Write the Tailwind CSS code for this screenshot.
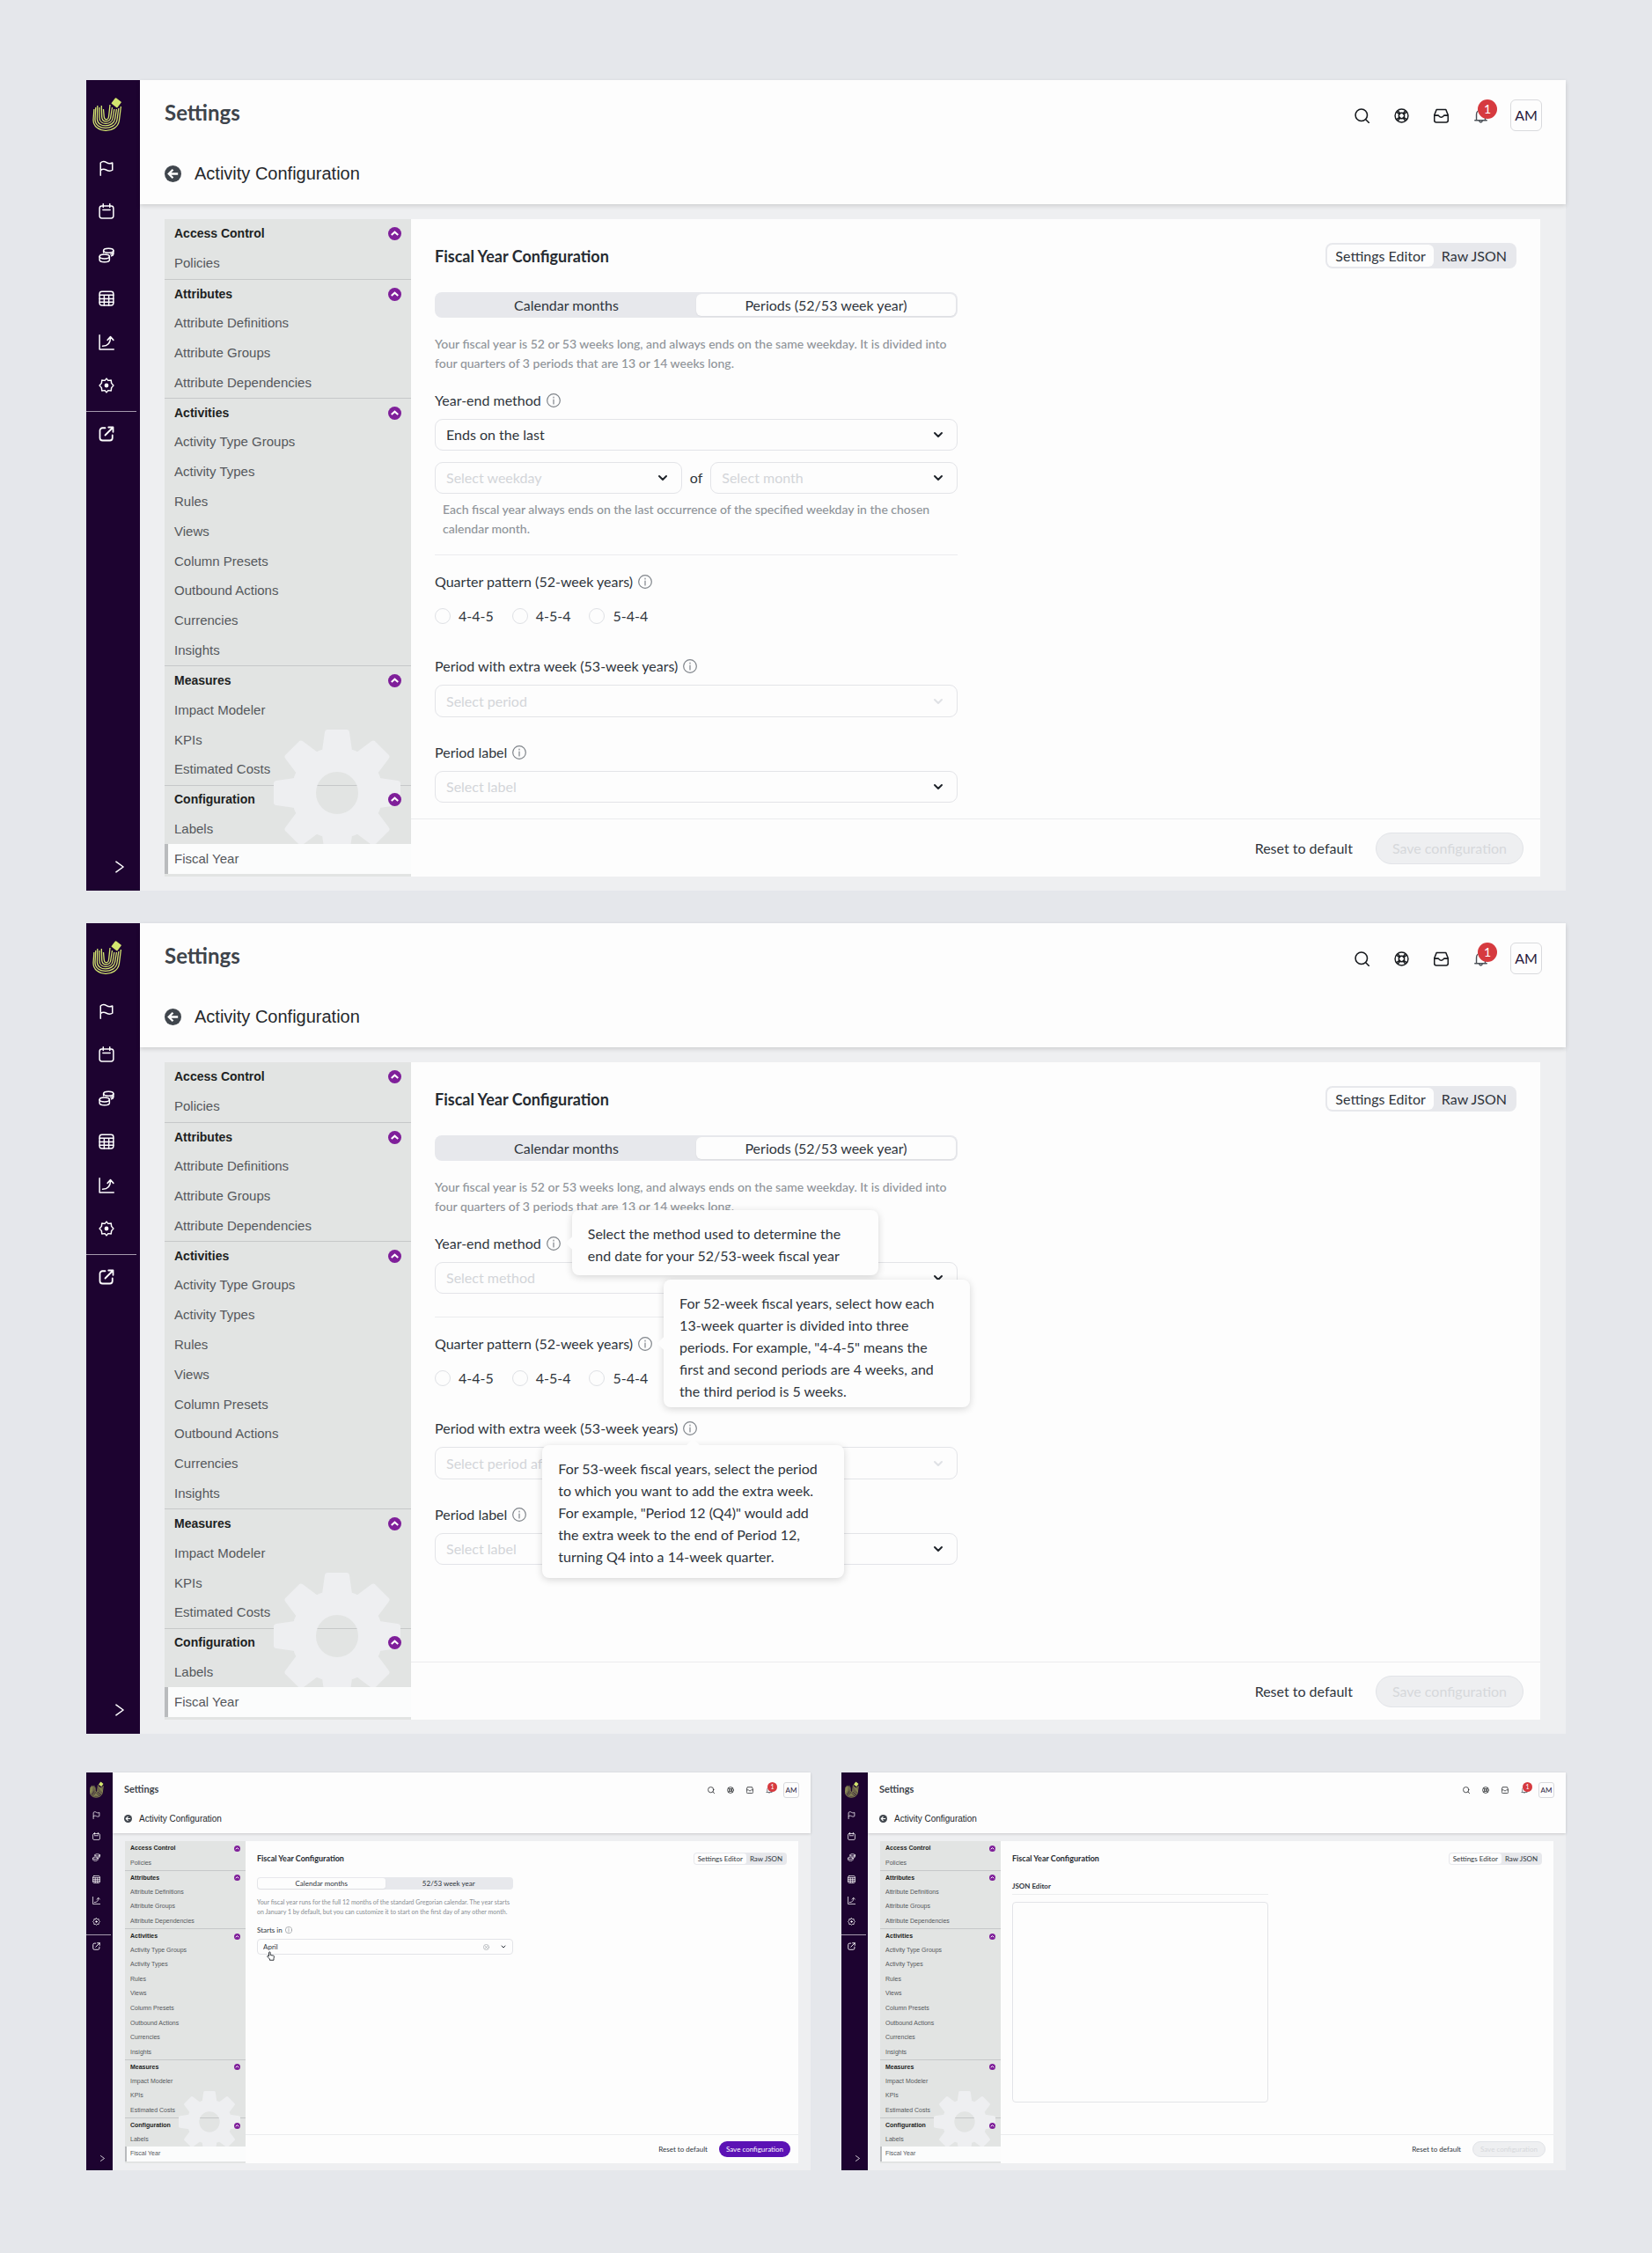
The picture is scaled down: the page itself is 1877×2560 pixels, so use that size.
<!DOCTYPE html>
<html lang="en">
  <head>
    <meta charset="UTF-8" />
    <meta name="viewport" content="width=device-width, initial-scale=1.0" />
    <title>Fiscal Year Configuration</title>
    <script src="https://cdn.jsdelivr.net/npm/@tailwindcss/browser@4"></script>
  </head>

  <body class="bg-[#e5e7eb] font-['Lato','Open_Sans',sans-serif] text-[#2f353c]">
    <main class="flex flex-col px-[98px] pt-[91px] pb-24">
      <div id="periods"></div>
      <div id="tooltips" class="mt-[37px]"></div>
      <div class="mt-11 grid grid-cols-2 gap-[35px]">
        <div id="calendar"></div>
        <div id="json"></div>
      </div>
    </main>

    <script>
      // line icons, all on a 24x24 box
      const icons = {
        flag: '<path d="M3 23V4c3-3 6-2.5 9-.5s6 2 9 .5v11c-3 2-6 1.5-9 0s-6-2-9 .5"/>',
        calendar: '<rect x="1.5" y="4" width="21" height="18.5" rx="3.5"/><path d="M7 1v5M17 1v5M6.5 10h11"/>',
        coins: '<ellipse cx="15" cy="5" rx="7.5" ry="3.2"/><path d="M7.5 5v3M22.5 5v5c0 1.5-1 2.5-3 3M22.5 7.5c0 1.5-2 2.5-4 3"/><ellipse cx="9" cy="14" rx="7.5" ry="3.2"/><path d="M1.5 14v5c0 4.5 15 4.5 15 0v-5"/>',
        table: '<rect x="1.5" y="1.5" width="21" height="21" rx="3.5"/><path d="M1.5 7h21M1.5 12.5h21M1.5 17.5h21M8.5 7v15.5M15.5 7v15.5"/>',
        chart: '<path d="M1.5 1v21.500H23M6 17.5c8 0 12-4 12-13M13.5 8.5 18 3.5l4.5 5"/>',
        cog: '<path d="M12 1.5 14.5 4.5 19 4l.5 4.5 3 3.5-3 3.5L19 20l-4.5-.5-2.5 3-2.5-3L5 20l-.5-4.5-3-3.5 3-3.5L5 4l4.500.5z"/><circle cx="12" cy="12" r="2.2" fill="currentColor"/>',
        external: '<path d="M10 3H6a4 4 0 0 0-4 4v11a4 4 0 0 0 4 4h11a4 4 0 0 0 4-4v-4M10 14 22 2M15 2h7v7"/>',
        right: '<path d="m5 2 14 10L5 22"/>',
        down: '<path d="m4 8 8 8 8-8"/>',
        search: '<circle cx="11" cy="11" r="9.5"/><path d="m18 18 5.5 5.5"/>',
        help: '<circle cx="12" cy="12" r="10.5"/><circle cx="12" cy="12" r="4.5"/><path d="m4.5 6.5 4 3M6.5 4.5l3 4M19.5 6.5l-4 3M17.5 4.5l-3 4M4.5 17.5l4-3M6.5 19.5l3-4M19.5 17.5l-4-3M17.5 19.5l-3-4"/>',
        inbox: '<path d="M4.500 2h15L23 11v8.5a3 3 0 0 1-3 3H4a3 3 0 0 1-3-3V11z"/><path d="M1.5 11.5H7c1.5 0 1.5 3 5 3s3.500-3 5-3h5.5"/>',
        bell: '<path d="M5 19V10c0-4 3-7 7-7s7 3 7 7v9M2.5 19.5h19M9.5 20c.5 3.5 4.5 3.5 5 0"/>',
        info: '<circle cx="12" cy="12" r="11"/><path d="M12 10.5v7.5M12 6v1.5"/>',
        clear: '<circle cx="12" cy="12" r="10.5"/><path d="m8 8 8 8M16 8l-8 8"/>',
      };

      const icon = (name, size, stroke = 2.2) =>
        `<svg class="${size} shrink-0" viewBox="0 0 24 24" fill="none" stroke="currentColor" stroke-width="${stroke}" stroke-linecap="round" stroke-linejoin="round" aria-hidden="true">${icons[name]}</svg>`;

      const logo = (size) => `
        <svg class="${size}" viewBox="0 0 34 40" fill="none" stroke="#d3e56f" stroke-width="1.3" aria-hidden="true">
          <path d="M12.5 13 13.2 21C13.5 26 18 26 18.6 21L20 8M10.3 9l.4 13C11 28.5 20 28.5 20.8 22L22.5 11M8 11v12c.2 8.5 14 8.5 15.2 0l1.6-10M5.8 9 5.4 24C5.5 34.5 24 34.5 25.6 24l1.8-11M3.8 11 3 24.5c0 13.1 23 13.3 25 .5l1.8-13M1.9 13 1 25c-.2 16 27.2 16.5 29.4 1l2-16"/>
          <rect x="23" y="1.5" width="8.5" height="8.5" rx="1" fill="#d3e56f" stroke="none" transform="rotate(38 27.2 5.7)"/>
        </svg>`;

      const backIcon = (size) => `
        <svg class="${size}" viewBox="0 0 20 20" fill="none" aria-hidden="true">
          <circle cx="10" cy="10" r="10" fill="#40464d"/>
          <path d="M16 10H5.5M10 5l-5 5 5 5" stroke="#fff" stroke-width="2.4"/>
        </svg>`;

      const collapseIcon = (size) => `
        <svg class="${size}" viewBox="0 0 16 16" fill="none" aria-hidden="true">
          <circle cx="8" cy="8" r="8" fill="#7f1f9a"/>
          <path d="m4 9.5 4-3.5 4 3.5" stroke="#fff" stroke-width="2.2"/>
        </svg>`;

      const bigGear = (size) => `
        <svg class="absolute ${size}" viewBox="-72 -72 144 144" fill="#eeeff1" aria-hidden="true">
          <circle r="38" fill="none" stroke="#eeeff1" stroke-width="28"/>
          ${[0, 45, 90, 135, 180, 225, 270, 315]
            .map((a) => `<path transform="rotate(${a})" d="M-17-48-14-69Q-13.5-72-11-72H11Q13.5-72 14-69L17-48z"/>`)
            .join('')}
        </svg>`;

      const large = {
        screen: 'min-h-[921px]',
        rail: 'w-[61px] pt-5 pb-5',
        logo: 'ml-[7px] w-[34px] h-10',
        railList: 'mt-[31px] ml-[14px] h-[265px] w-[18px]',
        railIcon: 'size-[18px]',
        railLine: 'mt-5 mr-1',
        external: 'mt-4 ml-[14px] size-[18px]',
        expand: 'mr-4',
        expandIcon: 'size-[14px]',
        header: 'h-[141px] pl-7 pr-[27px] pt-[22px] shadow-[0_2px_5px_rgba(0,0,0,0.14)]',
        title: 'text-[24px] leading-[30px]',
        tools: 'gap-[25px]',
        toolIcons: 'gap-[28px]',
        toolIcon: 'size-[17px]',
        badge: '-top-[10px] left-[5px] size-[22px] text-sm',
        avatar: 'size-9 rounded-md text-base',
        back: 'mt-[37px] gap-[15px] text-[20px] leading-[22px]',
        backIcon: 'size-[19px]',
        body: 'pl-7 pr-[29px] pt-[17px] pb-4',
        nav: 'w-[280px] pb-[3px] text-[15px]',
        navHead: 'px-[11px] text-[14px]',
        navItem: 'px-[11px]',
        navCurrent: 'border-l-4 pl-[7px]',
        navIcon: 'size-[15px]',
        gear: 'right-3 bottom-[23px] size-36',
        content: 'px-[27px] pt-[27px]',
        heading: 'text-[18px] leading-7',
        modes: 'rounded-lg p-[2px] text-base leading-[25px]',
        mode: 'rounded-md px-[9px]',
        form: 'mt-[27px] w-[594px]',
        tabs: 'rounded-lg p-[2px] text-base leading-[25px]',
        tab: 'rounded-md',
        hint: 'text-[14px] leading-[22px] font-medium',
        label: 'gap-[6px] text-base leading-5',
        info: 'size-4',
        footer: 'h-[66px] gap-[26px] pr-[19px] text-base',
        save: 'h-9 px-[18px]',
      };

      const small = {
        screen: 'min-h-[452px]',
        rail: 'w-[30px] pt-[10px] pb-[10px]',
        logo: 'ml-1 w-4 h-5',
        railList: 'mt-[14px] ml-[7px] h-[130px] w-[9px]',
        railIcon: 'size-[9px]',
        railLine: 'mt-[10px] mr-[2px]',
        external: 'mt-2 ml-[7px] size-[9px]',
        expand: 'mr-2',
        expandIcon: 'size-[7px]',
        header: 'h-[69px] pl-[13px] pr-[13px] pt-[11px] shadow-[0_1px_3px_rgba(0,0,0,0.16)]',
        title: 'text-[11px] leading-4',
        tools: 'gap-[12px]',
        toolIcons: 'gap-[14px]',
        toolIcon: 'size-[8px]',
        badge: '-top-[5px] left-[2px] size-[11px] text-[7px]',
        avatar: 'size-[18px] rounded-[3px] text-[8px]',
        back: 'mt-[18px] gap-2 text-[10px] leading-[11px]',
        backIcon: 'size-[9px]',
        body: 'px-[14px] pt-[9px] pb-2',
        nav: 'w-[137px] pb-[2px] text-[7px]',
        navHead: 'px-[6px] text-[7px]',
        navItem: 'px-[6px]',
        navCurrent: 'border-l-2 pl-[4px]',
        navIcon: 'size-[7px]',
        gear: 'right-[6px] bottom-[12px] size-[70px]',
        content: 'px-[13px] pt-[13px]',
        heading: 'text-[9px] leading-[14px]',
        modes: 'rounded p-px text-[8px] leading-[12px]',
        mode: 'rounded-[3px] px-1',
        form: 'mt-[14px] w-[291px]',
        tabs: 'rounded p-px text-[8px] leading-[12px]',
        tab: 'rounded-[3px]',
        hint: 'text-[7px] leading-[11px] font-medium',
        label: 'gap-[3px] text-[8px] leading-[10px]',
        info: 'size-2',
        footer: 'h-[33px] gap-[13px] pr-[9px] text-[8px]',
        save: 'h-[18px] px-2',
      };

      const menu = [
        ['Access Control', ['Policies']],
        ['Attributes', ['Attribute Definitions', 'Attribute Groups', 'Attribute Dependencies']],
        ['Activities', ['Activity Type Groups', 'Activity Types', 'Rules', 'Views', 'Column Presets', 'Outbound Actions', 'Currencies', 'Insights']],
        ['Measures', ['Impact Modeler', 'KPIs', 'Estimated Costs']],
        ['Configuration', ['Labels', 'Fiscal Year']],
      ];

      const rail = (s) => `
        <aside class="flex flex-col shrink-0 bg-[#1d0330] text-white ${s.rail}">
          ${logo(s.logo)}
          <nav class="flex flex-col justify-between ${s.railList}">
            ${['flag', 'calendar', 'coins', 'table', 'chart', 'cog']
              .map((name) => `<a href="#" aria-label="${name}">${icon(name, s.railIcon, 2)}</a>`)
              .join('')}
          </nav>
          <hr class="border-[#a59aad] ${s.railLine}" />
          <a href="#" aria-label="external" class="${s.external}">${icon('external', s.railIcon, 2.4)}</a>
          <button aria-label="expand" class="mt-auto self-end ${s.expand}">${icon('right', s.expandIcon, 2.6)}</button>
        </aside>`;

      const header = (s) => `
        <header class="relative z-10 bg-[#fdfdfd] ${s.header}">
          <div class="flex items-start justify-between">
            <h1 class="font-bold text-[#3e444b] ${s.title}">Settings</h1>
            <div class="flex items-center text-[#16191d] ${s.tools}">
              <div class="flex items-center ${s.toolIcons}">
                <button aria-label="search">${icon('search', s.toolIcon)}</button>
                <button aria-label="help">${icon('help', s.toolIcon, 2)}</button>
                <button aria-label="inbox">${icon('inbox', s.toolIcon)}</button>
                <button aria-label="notifications" class="relative text-[#4a5057]">
                  ${icon('bell', s.toolIcon, 2)}
                  <span class="absolute flex items-center justify-center rounded-full bg-[#d63a3f] text-white ${s.badge}">1</span>
                </button>
              </div>
              <button class="flex items-center justify-center border border-[#d9dadd] text-[#2a1a3c] ${s.avatar}">AM</button>
            </div>
          </div>
          <a href="#" class="flex items-center font-['Liberation_Sans',sans-serif] text-[#25282c] ${s.back}">${backIcon(s.backIcon)}Activity Configuration</a>
        </header>`;

      const sideNav = (s) => `
        <nav class="relative grid auto-rows-fr shrink-0 bg-[#e2e4e3] font-['Liberation_Sans',sans-serif] text-[#55585c] ${s.nav}">
          ${bigGear(s.gear)}
          ${menu
            .map(
              ([group, items], i) => `
            <h3 class="flex items-center justify-between font-bold text-[#1d1f22] ${i ? 'border-t border-[#c6c8c9]' : ''} ${s.navHead}">
              ${group}
              <button aria-label="collapse ${group}" class="relative z-10">${collapseIcon(s.navIcon)}</button>
            </h3>
            ${items
              .map((item) => `<a href="#" class="flex items-center ${item === 'Fiscal Year' ? `relative z-10 bg-[#fbfcfc] border-[#b9bbbd] ${s.navCurrent}` : s.navItem}">${item}</a>`)
              .join('')}`
            )
            .join('')}
        </nav>`;

      const screen = (s, content, canSave) => `
        <section class="flex bg-[#eeeff1] ${s.screen}">
          ${rail(s)}
          <div class="flex flex-1 flex-col">
            ${header(s)}
            <div class="flex flex-1 ${s.body}">
              ${sideNav(s)}
              <div class="flex flex-1 flex-col bg-[#fdfdfd]">
                <div class="flex-1 ${s.content}">
                  <div class="flex items-center justify-between">
                    <h2 class="font-bold text-[#262b31] ${s.heading}">Fiscal Year Configuration</h2>
                    <div class="flex bg-[#e7e8ec] ${s.modes}">
                      <button class="bg-[#fdfdfd] ${s.mode}">Settings Editor</button>
                      <button class="${s.mode}">Raw JSON</button>
                    </div>
                  </div>
                  <div class="${s.form}">${content}</div>
                </div>
                <footer class="flex items-center justify-end border-t border-[#ebecee] ${s.footer}">
                  <button>Reset to default</button>
                  ${
                    canSave
                      ? `<button class="rounded-full bg-[#5b12b5] text-white ${s.save}">Save configuration</button>`
                      : `<button disabled class="rounded-full border border-[#e2e4e8] bg-[#eeeff1] text-[#d6d8db] ${s.save}">Save configuration</button>`
                  }
                </footer>
              </div>
            </div>
          </div>
        </section>`;

      const tabs = (s, names, active) => `
        <div class="grid grid-cols-2 bg-[#e7e8ec] ${s.tabs}">
          ${names.map((name, i) => `<button class="${s.tab} ${i === active ? 'bg-[#fdfdfd] shadow-xs' : ''}">${name}</button>`).join('')}
        </div>`;

      const select = (id, text, { filled, disabled, height = 'h-9', name } = {}) => `
        <div class="relative flex-1">
          <select id="${id}" ${name ? `aria-label="${name}"` : ''} ${disabled ? 'disabled' : ''} class="block w-full appearance-none rounded-[9px] border border-[#e3e4e8] bg-[#fdfdfd] px-3 text-base opacity-100 ${height} ${filled ? 'text-[#2f353c]' : 'text-[#d3d5d9]'}">
            <option>${text}</option>
          </select>
          <span class="pointer-events-none absolute inset-y-0 right-4 flex items-center ${disabled ? 'text-[#dfe1e5]' : 'text-[#1f242a]'}">${icon('down', 'size-3', 4)}</span>
        </div>`;

      const info = (s, tip = '') => `<span class="relative text-[#7f848a]">${icon('info', s.info, 1.8)}${tip}</span>`;

      // the arrow is a rotated square tucked half under the bubble
      const tip = (box, arrow, lines) => `
        <span role="tooltip" class="absolute z-20 rounded-lg bg-[#fdfdfd] px-[18px] pt-[14px] text-base leading-[25px] whitespace-nowrap text-[#2f353c] shadow-[0_2px_8px_rgba(0,0,0,0.16)] ${box}">
          <span class="absolute size-[11px] rotate-45 bg-[#fdfdfd] ${arrow}"></span>
          ${lines.join('<br />')}
        </span>`;

      const hintText = ['Your fiscal year is 52 or 53 weeks long, and always ends on the same weekday. It is divided into', 'four quarters of 3 periods that are 13 or 14 weeks long.'];

      const periodForm = (id, method, periodText, tips = {}) => `
        ${tabs(large, ['Calendar months', 'Periods (52/53 week year)'], 1)}
        <p class="mt-[19px] whitespace-nowrap text-[#8f9499] ${large.hint}">${hintText.join('<br />')}</p>
        <div class="mt-[21px] flex items-center ${large.label}"><label for="${id}-method">Year-end method</label>${info(large, tips.method)}</div>
        <div class="mt-[11px] flex">${method}</div>
        <hr class="mt-[18px] border-[#ebecee]" />
        <fieldset class="mt-5">
          <legend class="flex items-center ${large.label}">Quarter pattern (52-week years)${info(large, tips.quarter)}</legend>
          <div class="mt-5 flex gap-[21px]">
            ${['4-4-5', '4-5-4', '5-4-4']
              .map(
                (p) => `
              <label class="flex items-center gap-[9px] text-base leading-[18px]">
                <input type="radio" name="${id}-pattern" class="size-[18px] appearance-none rounded-full border border-[#dfe1e5]" />${p}
              </label>`
              )
              .join('')}
          </div>
        </fieldset>
        <div class="mt-[38px] flex items-center ${large.label}"><label for="${id}-extra">Period with extra week (53-week years)</label>${info(large, tips.extra)}</div>
        <div class="mt-[11px] flex">${select(`${id}-extra`, periodText, { disabled: true, height: 'h-[37px]' })}</div>
        <div class="mt-[30px] flex items-center ${large.label}"><label for="${id}-label">Period label</label>${info(large)}</div>
        <div class="mt-[11px] flex">${select(`${id}-label`, 'Select label')}</div>`;

      const lastWeekday = `
        <div class="flex-1">
          <div class="flex">${select('a-method', 'Ends on the last', { filled: true })}</div>
          <div class="mt-[13px] flex items-center gap-[9px] text-base">
            ${select('a-weekday', 'Select weekday', { name: 'Weekday' })}
            of
            ${select('a-month', 'Select month', { name: 'Month' })}
          </div>
          <p class="mt-[7px] ml-[9px] whitespace-nowrap text-[#8f9499] ${large.hint}">Each fiscal year always ends on the last occurrence of the specified weekday in the chosen<br />calendar month.</p>
        </div>`;

      const anyMethod = `<div class="flex flex-1 pb-2">${select('b-method', 'Select method')}</div>`;

      const tips = {
        method: tip('left-[29px] -top-[30px] w-[348px] pb-[10px]', '-left-[5px] top-[32px]', ['Select the method used to determine the', 'end date for your 52/53-week fiscal year']),
        quarter: tip('left-[29px] -top-[65px] w-[348px] pb-[6px]', '-left-[5px] top-[67px]', [
          'For 52-week fiscal years, select how each',
          '13-week quarter is divided into three',
          'periods. For example, "4-4-5" means the',
          'first and second periods are 4 weeks, and',
          'the third period is 5 weeks.',
        ]),
        extra: tip('-left-[160px] top-[27px] w-[343px] pb-3', 'left-[166px] -top-[5px]', [
          'For 53-week fiscal years, select the period',
          'to which you want to add the extra week.',
          'For example, "Period 12 (Q4)" would add',
          'the extra week to the end of Period 12,',
          'turning Q4 into a 14-week quarter.',
        ]),
      };

      const calendarForm = `
        ${tabs(small, ['Calendar months', '52/53 week year'], 0)}
        <p class="mt-[9px] whitespace-nowrap text-[#8f9499] ${small.hint}">Your fiscal year runs for the full 12 months of the standard Gregorian calendar. The year starts<br />on January 1 by default, but you can customize it to start on the first day of any other month.</p>
        <div class="mt-[10px] flex items-center ${small.label}"><label for="starts-in">Starts in</label>${info(small)}</div>
        <div class="relative mt-[5px]">
          <select id="starts-in" class="block h-[18px] w-full appearance-none rounded border border-[#e3e4e8] bg-[#fdfdfd] px-[6px] text-[8px]">
            <option>April</option>
          </select>
          <span class="pointer-events-none absolute inset-y-0 right-2 flex items-center gap-[13px]">
            <span class="text-[#8f9499]">${icon('clear', 'size-[7px]', 2)}</span>
            ${icon('down', 'size-[6px]', 4)}
          </span>
          <svg class="absolute top-[14px] left-[11px] h-[11px] w-[9px]" viewBox="0 0 18 22" fill="#fff" stroke="#1f242a" stroke-width="1.8" stroke-linejoin="round" aria-hidden="true">
            <path d="M5 12V3.5a1.7 1.7 0 0 1 3.4 0V9l7 1.2c1.2.3 1.6 1 1.5 2.3L16 17v3.5H7V18l-5-5c-1.5-2 .8-3.5 2-2z"/>
          </svg>
        </div>`;

      const jsonForm = `
        <label for="json-editor" class="block border-b border-[#ebecee] pt-[5px] pb-1 font-bold text-[8px] leading-[10px]">JSON Editor</label>
        <textarea id="json-editor" class="mt-2 block h-[228px] w-full resize-none rounded border border-[#e3e4e8] bg-[#fdfdfd]"></textarea>`;

      document.querySelector('#periods').innerHTML = screen(large, periodForm('a', lastWeekday, 'Select period'));
      document.querySelector('#tooltips').innerHTML = screen(large, periodForm('b', anyMethod, 'Select period after which to add the week', tips));
      document.querySelector('#calendar').innerHTML = screen(small, calendarForm, true);
      document.querySelector('#json').innerHTML = screen(small, jsonForm);
    </script>
  </body>
</html>
